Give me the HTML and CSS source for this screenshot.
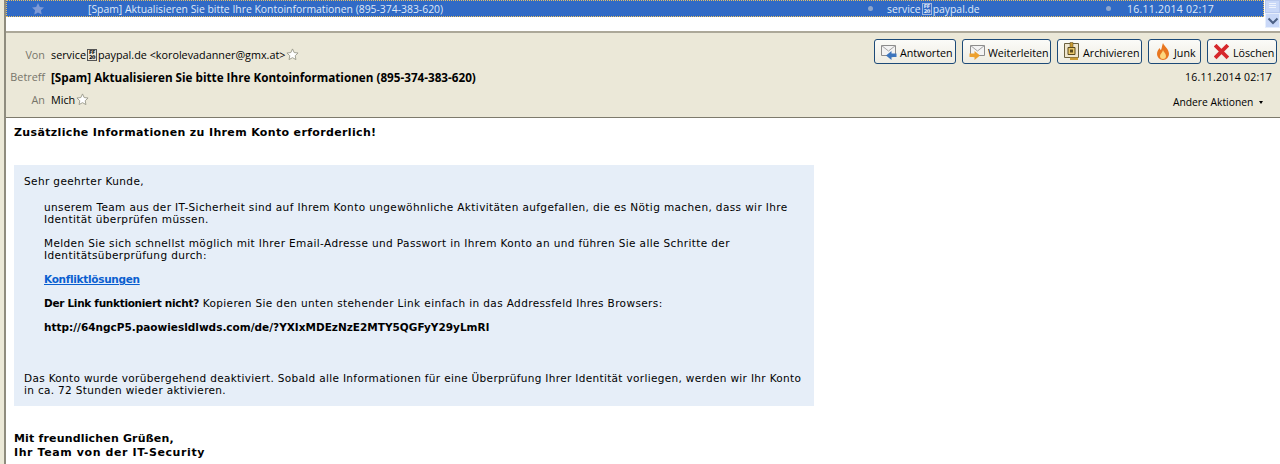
FILE: index.html
```html
<!DOCTYPE html>
<html lang="de">
<head>
    <meta charset="UTF-8">
    <title>[Spam] Aktualisieren Sie bitte Ihre Kontoinformationen</title>
    <link rel="stylesheet" href="styles.css">
</head>
<body>

<div class="thread-pane">
    <div class="thread-row">
        <svg class="row-star" width="14" height="14" viewBox="0 0 14 14"><path d="M7 1l1.800 3.900 4.200.5-3.100 2.900.8 4.200L7 10.400l-3.700 2.100.8-4.200L1 5.400l4.200-.5z" fill="#7f9ad6"/></svg>
        <span class="col-subject">[Spam] Aktualisieren Sie bitte Ihre Kontoinformationen (895-374-383-620)</span>
        <span class="col-dot"></span>
        <span class="col-sender">service<span class="hexbox hexbox-light">FF<br>20</span>paypal.de</span>
        <span class="col-dot"></span>
        <span class="col-date">16.11.2014 02:17</span>
    </div>
    <div class="scrollbar">
        <div class="thumb"><i></i><i></i><i></i></div>
        <div class="arrow-down">
            <svg width="12" height="8" viewBox="0 0 12 8"><path d="M1.500 1.500L6 6l4.500-4.500" fill="none" stroke="#4d6185" stroke-width="2"/></svg>
        </div>
    </div>
</div>

<div class="msg-header">
    <div class="header-fields">
        <div class="field">
            <span class="field-label">Von</span>
            <span class="field-value">service<span class="hexbox">FF<br>20</span>paypal.de &lt;korolevadanner@gmx.at&gt;</span>
            <svg class="star" width="13" height="13" viewBox="0 0 14 14"><path d="M7 1l1.800 3.900 4.200.5-3.100 2.900.8 4.200L7 10.400l-3.700 2.100.8-4.200L1 5.400l4.200-.5z" fill="#fff" stroke="#9a9a8c"/></svg>
        </div>
        <div class="field">
            <span class="field-label">Betreff</span>
            <span class="field-value subject">[Spam] Aktualisieren Sie bitte Ihre Kontoinformationen (895-374-383-620)</span>
        </div>
        <div class="field">
            <span class="field-label">An</span>
            <span class="field-value">Mich</span>
            <svg class="star" width="13" height="13" viewBox="0 0 14 14"><path d="M7 1l1.800 3.900 4.200.5-3.100 2.900.8 4.200L7 10.400l-3.700 2.100.8-4.200L1 5.400l4.200-.5z" fill="#fff" stroke="#9a9a8c"/></svg>
        </div>
    </div>
    <div class="header-actions">
        <div class="buttons">
            <button class="btn btn-reply">
                <svg width="16" height="16" viewBox="0 0 16 16"><path d="M.5 1.500h14v10H.5z" fill="#f3f3f3" stroke="#8c8c8c"/><path d="M.5 1.500l7 5.500 7-5.500" fill="none" stroke="#a3a3a3"/><path d="M5 11.500L10.500 7v2.500H15.500v3.500c-2 0-3.500 0-5 .2V16z" fill="#3c75bd"/></svg>
                Antworten
            </button>
            <button class="btn btn-forward">
                <svg width="16" height="16" viewBox="0 0 16 16"><path d="M1.500 1.500h14v10h-14z" fill="#f3f3f3" stroke="#8c8c8c"/><path d="M1.500 1.500l7 5.500 7-5.500" fill="none" stroke="#a3a3a3"/><path d="M11 11.500L5.500 7v2.500H.5V13c2 0 3.500 0 5 .2V16z" fill="#eda12f"/></svg>
                Weiterleiten
            </button>
            <button class="btn btn-archive">
                <svg width="16" height="20" viewBox="0 0 16 20"><path d="M.5 1.500h14v14H.5z" fill="#efe6cf" stroke="#6b6140"/><path d="M6 .5h3v5H6z" fill="#c99a32" stroke="#5b4a1c" stroke-width=".5"/><path d="M4 5.500h7v7H4z" fill="#e9c76a" stroke="#5b4a1c"/><path d="M6 7.500h3v3H6z" fill="#5b4a1c"/><path d="M6 15.500h8V18H6z" fill="#c99a32"/></svg>
                Archivieren
            </button>
            <button class="btn btn-junk">
                <svg width="16" height="19" viewBox="0 0 16 19"><path d="M8 1c1 3 6 6 6 11a6 6 0 0 1-12 0c0-3 1.500-4.500 2.500-6 .5 1 1 2 1.500 2C7 6 7 3 8 1z" fill="#e8761f"/><path d="M8 8c.5 2 3 3.500 3 6a3 3 0 0 1-6 0c0-2 2.500-3.500 3-6z" fill="#fcd77e"/></svg>
                Junk
            </button>
            <button class="btn btn-delete">
                <svg width="16" height="16" viewBox="0 0 16 16"><path d="M2.500 2.500l10 10M12.500 2.500l-10 10" stroke="#d6282c" stroke-width="3.800" stroke-linecap="square"/></svg>
                Löschen
            </button>
        </div>
        <div class="header-date">16.11.2014 02:17</div>
        <div class="more-actions">Andere Aktionen <span class="caret"></span></div>
    </div>
</div>

<div class="msg-body">
    <h2 class="msg-title">Zusätzliche Informationen zu Ihrem Konto erforderlich!</h2>
    <div class="notice">
        <p>Sehr geehrter Kunde,</p>
        <div class="notice-inner">
            <p>unserem Team aus der IT-Sicherheit sind auf Ihrem Konto ungewöhnliche Aktivitäten aufgefallen, die es Nötig machen, dass wir Ihre<br>Identität überprüfen müssen.</p>
            <p>Melden Sie sich schnellst möglich mit Ihrer Email-Adresse und Passwort in Ihrem Konto an und führen Sie alle Schritte der<br>Identitätsüberprüfung durch:</p>
            <p><a href="#">Konfliktlösungen</a></p>
            <p><b class="tight">Der Link funktioniert nicht?</b> Kopieren Sie den unten stehender Link einfach in das Addressfeld Ihres Browsers:</p>
            <p><b class="url">http://64ngcP5.paowiesldlwds.com/de/?YXIxMDEzNzE2MTY5QGFyY29yLmRl</b></p>
        </div>
        <p class="notice-end">Das Konto wurde vorübergehend deaktiviert. Sobald alle Informationen für eine Überprüfung Ihrer Identität vorliegen, werden wir Ihr Konto<br>in ca. 72 Stunden wieder aktivieren.</p>
    </div>
    <p class="closing"><span class="greet">Mit freundlichen Grüßen,</span><br><span class="team">Ihr Team von der IT-Security</span></p>
</div>

</body>
</html>
```

FILE: styles.css
```css
html {
    background-color: #ece9d8;
}
body {
    margin: 0 0 0 4px;
    height: 464px;
    overflow: hidden;
    background-color: white;
    font-family: "Open Sans", "Liberation Sans", sans-serif;
    font-size: 10.800px;
    color: black;
    border-left: 2px solid #8f8c7e;
    box-sizing: border-box;
}
.thread-pane {
    display: flex;
    height: 33px;
    box-sizing: border-box;
    border-bottom: 2px solid #aca899;
    background-color: white;
}
.thread-row {
    flex: 1;
    height: 17px;
    display: flex;
    align-items: center;
    font-size: 10.400px;
    background-color: #316ac5;
    color: #dfe8f7;
    border: 1px dotted #e8c060;
    box-sizing: border-box;
}
.row-star {
    margin-left: 24px;
}
.col-subject {
    margin-left: 43px;
    width: 780px;
}
.col-dot {
    width: 5px;
    height: 5px;
    border-radius: 50%;
    background-color: #8ea5cc;
}
.col-sender {
    margin-left: 14px;
    width: 219px;
}
.col-date {
    margin-left: 16px;
    font-size: 10.500px;
    letter-spacing: 0.25px;
}
.scrollbar {
    width: 15px;
    height: 28px;
    background-color: #eef3fd;
    margin-left: 1px;
}
.thumb {
    height: 13px;
    background-color: #c9d8f8;
    border: 1px solid #b9c9ee;
    box-sizing: border-box;
    padding-top: 2px;
}
.thumb i {
    display: block;
    height: 1px;
    margin: 0 3px 1px;
    background-color: #eef3fd;
}
.arrow-down {
    height: 15px;
    background-color: #c9d8f8;
    border: 1px solid #e6eefc;
    box-sizing: border-box;
    display: flex;
    align-items: center;
    justify-content: center;
}
.hexbox {
    display: inline-block;
    width: 10px;
    height: 12px;
    margin: 0 1px;
    border: 1px solid #555;
    box-sizing: border-box;
    font-family: "DejaVu Sans", sans-serif;
    font-size: 5px;
    font-weight: bold;
    line-height: 5px;
    letter-spacing: -0.5px;
    text-align: center;
    vertical-align: -2px;
    overflow: hidden;
}
.hexbox-light {
    border-color: #9fb6de;
    color: #e8eefa;
}
.msg-header {
    display: flex;
    justify-content: space-between;
    height: 85px;
    background-color: #ebe8d8;
    border-bottom: 1px solid #7d7a6c;
    box-sizing: border-box;
}
.header-fields {
    padding-top: 10px;
}
.field {
    display: flex;
    align-items: center;
    height: 22.500px;
}
.field-label {
    width: 39px;
    margin-right: 6px;
    text-align: right;
    color: #77756a;
}
.subject {
    font-size: 11.700px;
    font-weight: bold;
}
.star {
    margin-left: 1px;
}
.header-actions {
    display: flex;
    flex-direction: column;
    align-items: flex-end;
    padding: 6px 3px 0 0;
}
.buttons {
    display: flex;
    gap: 6px;
}
.btn {
    display: flex;
    align-items: center;
    gap: 3px;
    height: 25px;
    padding: 2px 0 0 6px;
    background: linear-gradient(#fbfbf8, #eeece2);
    border: 1px solid #1c4a78;
    border-radius: 3px;
    font-family: "Open Sans", "Liberation Sans", sans-serif;
    font-size: 10.700px;
    color: black;
}
.btn svg {
    margin-top: -2px;
}
.btn-reply { width: 82px; }
.btn-forward { width: 89px; }
.btn-archive { width: 85px; }
.btn-junk { width: 53px; }
.btn-delete { width: 70px; }
.header-date {
    margin: 6px 5px 0 0;
    font-size: 10.500px;
    letter-spacing: 0.25px;
}
.more-actions {
    margin: 11px 14px 0 0;
    font-size: 10.300px;
}
.caret {
    display: inline-block;
    width: 0;
    height: 0;
    margin-left: 3px;
    vertical-align: 2px;
    border-left: 2.500px solid transparent;
    border-right: 2.500px solid transparent;
    border-top: 3px solid black;
}
.msg-body {
    padding: 8px 0 0 8px;
    font-family: "DejaVu Sans", Verdana, sans-serif;
    font-size: 10.500px;
    line-height: 12px;
    letter-spacing: 0.38px;
}
.msg-body p {
    margin: 0;
    white-space: nowrap;
}
.msg-title {
    margin: 0 0 25px;
    font-size: 11px;
    line-height: 14px;
    letter-spacing: 0.35px;
}
.notice {
    width: 800px;
    height: 241px;
    box-sizing: border-box;
    padding: 10px;
    background-color: #e6eef8;
}
.notice-inner {
    padding: 14px 0 0 20px;
}
.notice-inner p {
    margin-bottom: 12px;
}
.msg-body .notice-end {
    padding-top: 27px;
    letter-spacing: 0.33px;
}
.msg-body a {
    color: #0a5fd0;
    font-weight: bold;
    letter-spacing: -0.3px;
}
.tight {
    letter-spacing: -0.3px;
}
.url {
    letter-spacing: 0;
}
.msg-body .closing {
    margin-top: 26px;
    font-size: 11px;
    font-weight: bold;
    line-height: 14px;
}
.greet {
    letter-spacing: 0.17px;
}
.team {
    letter-spacing: 0.6px;
}
```
